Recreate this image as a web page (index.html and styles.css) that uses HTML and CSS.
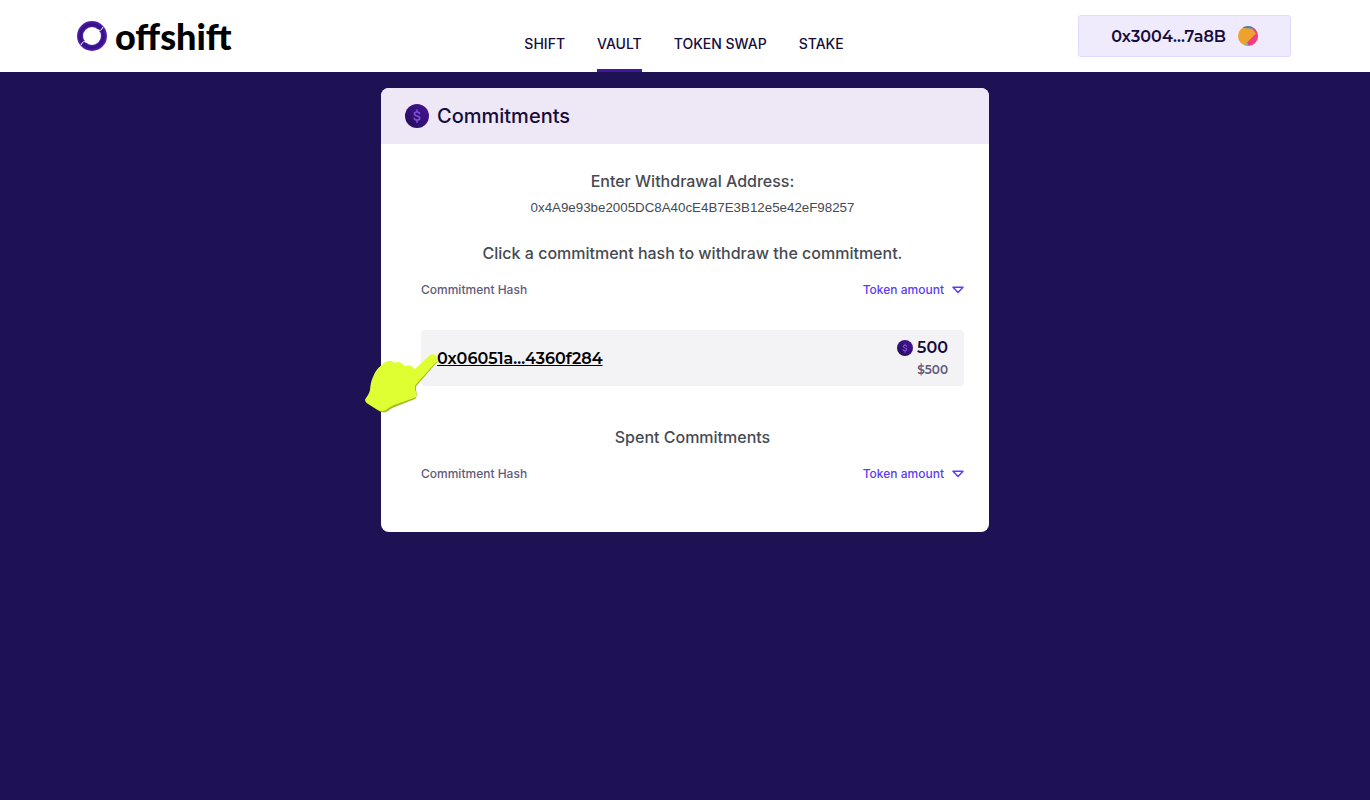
FILE: index.html
```html
<!DOCTYPE html>
<html lang="en">
<head>
    <meta charset="UTF-8">
    <meta name="viewport" content="width=device-width, initial-scale=1.0">
    <title>Offshift - Vault</title>
    <link rel="stylesheet" href="styles.css">
</head>
<body>
    <svg class="defs" width="0" height="0" aria-hidden="true">
        <defs>
            <linearGradient id="coin-fill" x1="1" y1="0" x2="0" y2="1">
                <stop offset="0" stop-color="#4a1499"/>
                <stop offset="1" stop-color="#200f55"/>
            </linearGradient>
            <symbol id="coin" viewBox="0 0 24 24">
                <circle cx="12" cy="12" r="12" fill="url(#coin-fill)"/>
                <path d="M14.600 9.500C14.200 8.400 13.300 8 12 8c-1.600 0-2.600.8-2.600 1.900 0 2.700 5.400 1.400 5.400 4.200 0 1.200-1.100 2-2.800 2-1.500 0-2.500-.6-2.900-1.800M12 6v2M12 16.100V18.200" fill="none" stroke="#8250df" stroke-width="1.600" stroke-linecap="round"/>
            </symbol>
            <symbol id="sort" viewBox="0 0 12 8">
                <path d="M1 1.200h10L6 6.500z" fill="none" stroke="#5b3df5" stroke-width="1.500" stroke-linejoin="round"/>
            </symbol>
        </defs>
    </svg>

    <header class="header">
        <a class="logo" href="#">
            <svg class="logo-mark" viewBox="0 0 30 30" aria-hidden="true">
                <defs>
                    <radialGradient id="ring" gradientUnits="userSpaceOnUse" cx="15" cy="15" r="15">
                        <stop offset="0.600" stop-color="#4d1bab"/>
                        <stop offset="0.780" stop-color="#32107c"/>
                        <stop offset="1" stop-color="#5b21c0"/>
                    </radialGradient>
                </defs>
                <circle cx="15" cy="15" r="12" fill="none" stroke="url(#ring)" stroke-width="6"/>
                <path d="M21 8.500c1 1.200 2.500 1.200 3.500 0l1.500-2.500M9 21.500c-1-1.200-2.500-1.200-3.500 0L4 24" fill="none" stroke="#fff" stroke-width="1"/>
            </svg>
            <span class="logo-text">offshift</span>
        </a>
        <nav class="nav">
            <a href="#">SHIFT</a>
            <a class="active" href="#">VAULT</a>
            <a href="#">TOKEN SWAP</a>
            <a href="#">STAKE</a>
        </nav>
        <button class="account" type="button">
            0x3004...7a8B
            <svg class="avatar" viewBox="0 0 20 20" aria-hidden="true">
                <clipPath id="avatar-clip"><circle cx="10" cy="10" r="10"/></clipPath>
                <g clip-path="url(#avatar-clip)">
                    <path d="M0 0h20v20H0z" fill="#eda12f"/>
                    <path d="M3 0h14v5L14 2.500 5 2z" fill="#3f7fdb"/>
                    <path d="M14 2.500l7 1v17H11l-2-4 9-9z" fill="#ee3f86"/>
                    <path d="M9 16.500l2 3.500H6z" fill="#4fc0e8"/>
                </g>
            </svg>
        </button>
    </header>

    <main class="card">
        <div class="card-header">
            <svg class="coin" aria-hidden="true"><use href="#coin"/></svg>
            <h1>Commitments</h1>
        </div>
        <div class="card-body">
            <label class="title" for="address">Enter Withdrawal Address:</label>
            <input class="address" id="address" type="text" value="0x4A9e93be2005DC8A40cE4B7E3B12e5e42eF98257" spellcheck="false">

            <h2 class="title">Click a commitment hash to withdraw the commitment.</h2>
            <div class="list-head">
                <span>Commitment Hash</span>
                <button class="sort" type="button">Token amount <svg aria-hidden="true"><use href="#sort"/></svg></button>
            </div>
            <div class="row">
                <a class="hash" href="#">0x06051a...4360f284</a>
                <div class="amount">
                    <div class="tokens"><svg aria-hidden="true"><use href="#coin"/></svg>500</div>
                    <div class="usd">$500</div>
                </div>
                <svg class="pointer" viewBox="0 0 74 62" aria-hidden="true">
                    <path d="M73 8 51 33.500c0 2 0 4 .5 6 .5 3 0 5-1.500 6.500l-20 8c-3 1-5 2.500-7 4-2 1.500-5 2-8 .5L3 51c-2-1-3-3-3-5z" fill="#a3c02c"/>
                    <path d="M65 2C68-.5 74 3 72 8L50 32.500v4.500c1.500 2 1.500 4 1 7-6 2.500-14 5-21 7.500-4 1.500-6 3-9 5.500-3 1.500-5 1.500-8 0L2 50c-1.500-1-2-3-1-5 2-3 3.500-5 4-8 .5-5 1-9 3-13 2-5 4-8 7-10.500 3-3.500 7-5.800 10-5.800 3 0 3.500 2 5.500 2 2-1 4-1 6 .3 2 1.200 2 3 4.500 3 2-.6 4-.6 6 .5 1.500.8 2 2 3 2.500z" fill="#dfff33"/>
                </svg>
            </div>

            <h2 class="title">Spent Commitments</h2>
            <div class="list-head">
                <span>Commitment Hash</span>
                <button class="sort" type="button">Token amount <svg aria-hidden="true"><use href="#sort"/></svg></button>
            </div>
        </div>
    </main>
</body>
</html>
```

FILE: styles.css
```css
:root {
    --background: #1e1154;
    --text: #160c3d;
    --title: #464a53;
    --muted: #625a7c;
    --accent: #5b3df5;
    --bar: #4517a1;
    --number-font: Montserrat, Inter, sans-serif;
}

* {
    box-sizing: border-box;
}

body {
    margin: 0;
    min-height: 100vh;
    background: var(--background);
    color: var(--text);
    font-family: Inter, sans-serif;
    font-weight: 500;
}

a {
    color: inherit;
    text-decoration: none;
}

button {
    font: inherit;
    color: inherit;
    cursor: pointer;
}

h1, h2 {
    margin: 0;
    font-weight: 500;
}

.defs {
    position: absolute;
}

.header {
    display: grid;
    grid-template-columns: 1fr auto 1fr;
    align-items: center;
    height: 72px;
    padding: 0 79px 0 77px;
    background: #fff;
}

.logo {
    display: flex;
    align-items: center;
    gap: 8px;
    color: #000;
}

.logo-mark {
    width: 30px;
    height: 30px;
}

.logo-text {
    font-family: Lato, sans-serif;
    font-size: 36px;
    font-weight: 900;
    line-height: 38px;
}

.nav {
    display: flex;
    gap: 32px;
    height: 100%;
    font-size: 14px;
}

.nav a {
    padding-top: 35px;
    line-height: 18px;
    border-bottom: 3px solid transparent;
}

.nav .active {
    border-color: var(--bar);
}

.account {
    display: flex;
    align-items: center;
    justify-self: end;
    gap: 12px;
    height: 42px;
    padding: 0 32px;
    border: 1px solid #dfd9fb;
    border-radius: 3px;
    background: #efebfc;
    font-family: var(--number-font);
    font-size: 16px;
    font-weight: 600;
}

.avatar {
    width: 20px;
    height: 20px;
}

.card {
    max-width: 608px;
    margin: 16px auto;
    border-radius: 8px;
    background: #fff;
}

.card-header {
    display: flex;
    align-items: center;
    gap: 8px;
    height: 56px;
    padding: 0 24px;
    border-radius: 8px 8px 0 0;
    background: #eee7f6;
}

.card-header h1 {
    font-size: 20px;
}

.coin {
    width: 24px;
    height: 24px;
}

.card-body {
    display: flex;
    flex-direction: column;
    padding: 27px 25px 48px 40px;
}

.title {
    color: var(--title);
    font-size: 16px;
    line-height: 20px;
    text-align: center;
}

.address {
    height: 20px;
    margin: 6px 0 26px;
    padding: 0;
    border: 0;
    outline: 0;
    background: none;
    color: var(--title);
    font-family: "Liberation Sans", Arial, sans-serif;
    text-align: center;
}

.list-head {
    display: flex;
    justify-content: space-between;
    align-items: center;
    margin-top: 17px;
    color: var(--muted);
    font-size: 12px;
    line-height: 20px;
}

.sort {
    display: flex;
    align-items: center;
    gap: 8px;
    padding: 0;
    border: 0;
    background: none;
    color: var(--accent);
}

.sort svg {
    width: 12px;
    height: 8px;
}

.row {
    position: relative;
    display: flex;
    justify-content: space-between;
    align-items: center;
    height: 56px;
    margin: 30px 0 41px;
    padding: 0 16px;
    border-radius: 4px;
    background: #f3f3f5;
    font-family: var(--number-font);
    font-weight: 600;
}

.hash {
    color: #000;
    font-size: 16px;
    text-decoration: underline;
}

.amount {
    text-align: right;
}

.tokens {
    display: flex;
    align-items: center;
    gap: 4px;
    font-size: 16px;
    line-height: 24px;
}

.tokens svg {
    width: 16px;
    height: 16px;
}

.usd {
    color: var(--muted);
    font-size: 12px;
    line-height: 20px;
}

/* hand pointing at the commitment hash */
.pointer {
    position: absolute;
    top: 23px;
    left: -56px;
    width: 74px;
    height: 62px;
    pointer-events: none;
}
```
